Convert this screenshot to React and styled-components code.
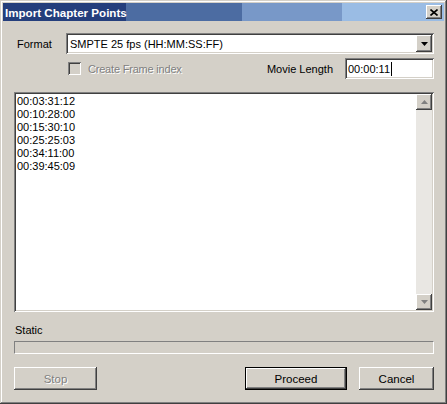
import React from 'react';
import styled, { createGlobalStyle } from 'styled-components';

const GlobalStyle = createGlobalStyle`
  html, body {
    margin: 0;
    padding: 0;
    background: #d4d0c8;
  }
  * {
    box-sizing: border-box;
  }
`;

const raised = `
  box-shadow: inset -1px -1px #404040, inset 1px 1px #ffffff,
    inset -2px -2px #808080, inset 2px 2px #d4d0c8;
`;

const sunken = `
  box-shadow: inset 1px 1px #808080, inset -1px -1px #ffffff,
    inset 2px 2px #404040, inset -2px -2px #d4d0c8;
`;

// Dialog frame
const Window = styled.div`
  width: 447px;
  height: 404px;
  padding: 3px;
  background: #d4d0c8;
  font-family: 'Liberation Sans', Arial, sans-serif;
  font-size: 11px;
  color: #000;
  box-shadow: inset -1px -1px #404040, inset 1px 1px #d4d0c8,
    inset -2px -2px #808080, inset 2px 2px #ffffff;
  display: flex;
  flex-direction: column;
`;

const TitleBar = styled.div`
  height: 18px;
  display: flex;
  align-items: center;
  justify-content: space-between;
  padding: 0 2px 0 2px;
  background: linear-gradient(
    90deg,
    #243e7c 0 123px,
    #4c6ca2 123px 239px,
    #7898c8 239px 339px,
    #9abce4 339px
  );
`;

const Title = styled.span`
  color: #fff;
  font-weight: bold;
  font-size: 11.6px;
`;

const CloseButton = styled.div`
  width: 16px;
  height: 14px;
  background: #d4d0c8;
  ${raised}
  display: flex;
  align-items: center;
  justify-content: center;
`;

const Client = styled.div`
  flex: 1;
  padding: 12px 10px 0 11px;
  display: flex;
  flex-direction: column;
`;

const Row = styled.div`
  display: flex;
  align-items: center;
  height: 21px;
  margin-top: ${(p) => p.$gap || 0}px;
`;

const FieldLabel = styled.span`
  width: 52px;
  padding-left: 3px;
`;

const Combo = styled.div`
  flex: 1;
  height: 21px;
  background: #fff;
  ${sunken}
  display: flex;
  align-items: center;
  justify-content: space-between;
  padding: 2px 2px 2px 4px;
`;

const DropButton = styled.div`
  width: 16px;
  height: 17px;
  background: #d4d0c8;
  ${raised}
  display: flex;
  align-items: center;
  justify-content: center;
`;

const CheckWrap = styled.label`
  display: flex;
  align-items: center;
  margin-left: 54px;
  color: #808080;
  text-shadow: 1px 1px #fff;
  letter-spacing: -0.2px;
  flex: 1;
`;

const CheckBox = styled.span`
  width: 13px;
  height: 13px;
  margin-right: 7px;
  background: #d4d0c8;
  ${sunken}
`;

const LengthLabel = styled.span`
  margin-right: 12px;
`;

const TextInput = styled.div`
  width: 89px;
  height: 21px;
  background: #fff;
  ${sunken}
  display: flex;
  align-items: center;
  padding: 0 3px;
`;

const Caret = styled.span`
  width: 1px;
  height: 14px;
  background: #000;
  margin-left: 1px;
`;

const ListBox = styled.div`
  margin-top: 13px;
  height: 220px;
  background: #fff;
  ${sunken}
  padding: 2px;
  display: flex;
`;

const ListItems = styled.div`
  flex: 1;
  padding: 1px 1px;
  line-height: 13px;
`;

const ScrollBar = styled.div`
  width: 16px;
  display: flex;
  flex-direction: column;
  justify-content: space-between;
  background: #e9e7e3;
`;

const ScrollButton = styled.div`
  width: 16px;
  height: 16px;
  background: #d4d0c8;
  ${raised}
  display: flex;
  align-items: center;
  justify-content: center;
`;

const StatusLabel = styled.div`
  margin-top: 12px;
  height: 13px;
  line-height: 13px;
  padding-left: 1px;
`;

const Progress = styled.div`
  margin-top: 4px;
  height: 13px;
  border-top: 1px solid #808080;
  border-left: 1px solid #808080;
  border-bottom: 1px solid #fff;
  border-right: 1px solid #fff;
`;

const ButtonRow = styled.div`
  margin-top: 13px;
  display: flex;
  align-items: center;
`;

const Button = styled.div`
  width: ${(p) => p.$w}px;
  height: 23px;
  margin-left: ${(p) => p.$ml || 0}px;
  background: #d4d0c8;
  display: flex;
  align-items: center;
  justify-content: center;
  font-size: 11.5px;
  color: ${(p) => (p.$disabled ? '#808080' : '#000')};
  text-shadow: ${(p) => (p.$disabled ? '1px 1px #fff' : 'none')};
  ${(p) =>
    p.$default
      ? `box-shadow: inset 0 0 0 1px #000, inset -2px -2px #404040, inset 2px 2px #ffffff,
    inset -3px -3px #808080;`
      : raised}
`;

const Spacer = styled.div`
  flex: 1;
`;

const Arrow = ({ dir = 'down', color = '#000' }) => (
  <svg width="7" height="4" viewBox="0 0 7 4" style={{ display: 'block' }}>
    {dir === 'down' ? (
      <path d="M0 0h7L3.5 4z" fill={color} />
    ) : (
      <path d="M0 4h7L3.5 0z" fill={color} />
    )}
  </svg>
);

const times = ['00:03:31:12', '00:10:28:00', '00:15:30:10', '00:25:25:03', '00:34:11:00', '00:39:45:09'];

export default function App() {
  return (
    <>
      <GlobalStyle />
      <Window>
        <TitleBar>
          <Title>Import Chapter Points</Title>
          <CloseButton>
            <svg width="8" height="7" viewBox="0 0 8 7">
              <path d="M0.5 0.5L7.5 6.5M7.5 0.5L0.5 6.5" stroke="#000" strokeWidth="1.6" />
            </svg>
          </CloseButton>
        </TitleBar>

        <Client>
          <Row>
            <FieldLabel>Format</FieldLabel>
            <Combo>
              <span>SMPTE 25 fps (HH:MM:SS:FF)</span>
              <DropButton>
                <Arrow />
              </DropButton>
            </Combo>
          </Row>

          <Row $gap={4}>
            <CheckWrap>
              <CheckBox />
              Create Frame index
            </CheckWrap>
            <LengthLabel>Movie Length</LengthLabel>
            <TextInput>
              00:00:11
              <Caret />
            </TextInput>
          </Row>

          <ListBox>
            <ListItems>
              {times.map((t) => (
                <div key={t}>{t}</div>
              ))}
            </ListItems>
            <ScrollBar>
              <ScrollButton>
                <Arrow dir="up" color="#808080" />
              </ScrollButton>
              <ScrollButton>
                <Arrow color="#808080" />
              </ScrollButton>
            </ScrollBar>
          </ListBox>

          <StatusLabel>Static</StatusLabel>
          <Progress />

          <ButtonRow>
            <Button $w={83} $disabled>
              Stop
            </Button>
            <Spacer />
            <Button $w={102} $default>
              Proceed
            </Button>
            <Button $w={75} $ml={12}>
              Cancel
            </Button>
          </ButtonRow>
        </Client>
      </Window>
    </>
  );
}
